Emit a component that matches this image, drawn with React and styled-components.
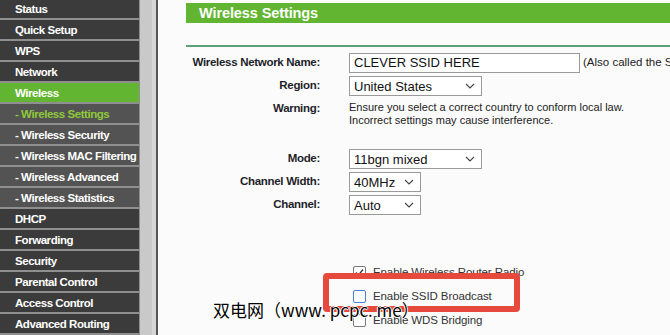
import React from "react";
import styled, { createGlobalStyle } from "styled-components";

const GlobalStyle = createGlobalStyle`
  html, body {
    margin: 0;
    padding: 0;
    overflow: hidden;
    background: #fbfbfb;
  }
  body {
    font-family: "Liberation Sans", Arial, sans-serif;
  }
`;

const menu = [
  { label: "Status" },
  { label: "Quick Setup" },
  { label: "WPS" },
  { label: "Network" },
  { label: "Wireless", active: true },
  { label: "- Wireless Settings", sub: true, current: true },
  { label: "- Wireless Security", sub: true },
  { label: "- Wireless MAC Filtering", sub: true },
  { label: "- Wireless Advanced", sub: true },
  { label: "- Wireless Statistics", sub: true },
  { label: "DHCP" },
  { label: "Forwarding" },
  { label: "Security" },
  { label: "Parental Control" },
  { label: "Access Control" },
  { label: "Advanced Routing" },
];

const Page = styled.div`
  position: relative;
  display: flex;
  width: 670px;
  height: 335px;
  overflow: hidden;
  background: #fbfbfb;
`;

const Sidebar = styled.nav`
  width: 140px;
  flex-shrink: 0;
  display: flex;
  flex-direction: column;
  margin-top: -1px;
  background: #8f8f8f;
`;

const MenuItem = styled.div`
  height: 19px;
  margin-bottom: 2px;
  margin-right: 1px;
  display: flex;
  align-items: center;
  padding-left: 15px;
  font-size: 11.5px;
  letter-spacing: -0.45px;
  font-weight: bold;
  white-space: nowrap;
  color: ${({ $current }) => ($current ? "#8fc93a" : "#ffffff")};
  background: ${({ $active, $sub }) =>
    $active ? "#62b531" : $sub ? "#535353" : "#3b3b3b"};
`;

const Gutter = styled.div`
  width: 18px;
  flex-shrink: 0;
  display: flex;
  background: #c9c9c9;
`;

const GutterEdge = styled.div`
  margin-left: auto;
  width: 4px;
  background: #d6d6d6;
  border-right: 2px solid #555;
`;

const Main = styled.main`
  flex: 1;
  padding: 3px 0 0 28px;
  display: flex;
  flex-direction: column;
`;

const HeaderBar = styled.div`
  height: 20px;
  background: #62b531;
  color: #fff;
  font-weight: bold;
  font-size: 14.5px;
  letter-spacing: -0.1px;
  display: flex;
  align-items: center;
  padding-left: 13px;
`;

const Rule = styled.div`
  height: 2px;
  margin-top: 22px;
  background: #5f9f7a;
`;

const Form = styled.div`
  display: grid;
  grid-template-columns: 134px 1fr;
  column-gap: 29px;
  margin-top: 6px;
`;

const Label = styled.div`
  grid-column: 1;
  text-align: right;
  font-size: 11.5px;
  letter-spacing: -0.3px;
  font-weight: bold;
  color: #1f1f2a;
  height: ${({ $h }) => $h || 23}px;
  line-height: 19px;
  white-space: nowrap;
`;

const Field = styled.div`
  grid-column: 2;
  display: flex;
  align-items: flex-start;
  gap: 3px;
  height: ${({ $h }) => $h || 23}px;
  white-space: nowrap;
`;

const TextBox = styled.div`
  width: 225px;
  height: 18px;
  border: 1px solid #9a9a9a;
  background: #fff;
  font-size: 13px;
  line-height: 18px;
  padding-left: 4px;
  color: #111;
`;

const Hint = styled.span`
  font-size: 11.5px;
  line-height: 19px;
  color: #222;
`;

const Select = styled.div`
  width: ${({ $w }) => $w}px;
  height: 18px;
  border: 1px solid #9a9a9a;
  background: #fff;
  display: flex;
  align-items: center;
  justify-content: space-between;
  padding: 0 6px 0 4px;
  box-sizing: content-box;
  font-size: 13px;
  color: #111;
`;

const Note = styled.div`
  font-size: 11px;
  line-height: 13px;
  color: #222;
  padding-top: 2px;
`;

const Checks = styled.div`
  display: flex;
  flex-direction: column;
  margin: 48px 0 0 167px;
  gap: 12px;
`;

const CheckRow = styled.div`
  display: flex;
  align-items: center;
  gap: 7px;
  height: 12px;
  font-size: 11.5px;
  letter-spacing: -0.1px;
  color: #333;
`;

const Box = styled.span`
  width: 11px;
  height: 11px;
  border: 1px solid ${({ $blue }) => ($blue ? "#4a7fd6" : "#777")};
  border-radius: 2px;
  background: #fff;
  display: flex;
  align-items: center;
  justify-content: center;
`;

const Highlight = styled.div`
  position: absolute;
  left: 323px;
  top: 273px;
  width: 185px;
  height: 27px;
  border: 6px solid #e64a3c;
  border-radius: 4px;
`;

const Watermark = styled.div`
  position: absolute;
  left: 213px;
  top: 300px;
  font-family: "Noto Sans CJK SC", "Liberation Sans", sans-serif;
  font-size: 17px;
  line-height: 20px;
  color: #000;
  white-space: nowrap;
  text-shadow: 1px 0 0 #fff, -1px 0 0 #fff, 0 1px 0 #fff, 0 -1px 0 #fff;
`;

const Chevron = () => (
  <svg width="10" height="6" viewBox="0 0 10 6">
    <path d="M1 1l4 4 4-4" fill="none" stroke="#444" strokeWidth="1.1" />
  </svg>
);

const Tick = () => (
  <svg width="9" height="9" viewBox="0 0 9 9">
    <path d="M1 4.5l2.5 2.5L8 1.5" fill="none" stroke="#333" strokeWidth="1.3" />
  </svg>
);

export default function App() {
  return (
    <>
      <GlobalStyle />
      <Page>
        <Sidebar>
          {menu.map((m) => (
            <MenuItem key={m.label} $active={m.active} $sub={m.sub} $current={m.current}>
              {m.label}
            </MenuItem>
          ))}
        </Sidebar>
        <Gutter>
          <GutterEdge />
        </Gutter>
        <Main>
          <HeaderBar>Wireless Settings</HeaderBar>
          <Rule />
          <Form>
            <Label>Wireless Network Name:</Label>
            <Field>
              <TextBox>CLEVER SSID HERE</TextBox>
              <Hint>(Also called the SSID)</Hint>
            </Field>
            <Label>Region:</Label>
            <Field>
              <Select $w={121}>
                United States
                <Chevron />
              </Select>
            </Field>
            <Label $h={50}>Warning:</Label>
            <Field $h={50}>
              <Note>
                Ensure you select a correct country to conform local law.
                <br />
                Incorrect settings may cause interference.
              </Note>
            </Field>
            <Label>Mode:</Label>
            <Field>
              <Select $w={121}>
                11bgn mixed
                <Chevron />
              </Select>
            </Field>
            <Label>Channel Width:</Label>
            <Field>
              <Select $w={60}>
                40MHz
                <Chevron />
              </Select>
            </Field>
            <Label>Channel:</Label>
            <Field>
              <Select $w={60}>
                Auto
                <Chevron />
              </Select>
            </Field>
          </Form>
          <Checks>
            <CheckRow>
              <Box>
                <Tick />
              </Box>
              Enable Wireless Router Radio
            </CheckRow>
            <CheckRow>
              <Box $blue />
              Enable SSID Broadcast
            </CheckRow>
            <CheckRow>
              <Box />
              Enable WDS Bridging
            </CheckRow>
          </Checks>
        </Main>
        <Highlight />
        <Watermark>双电网（www. pcpc. me）</Watermark>
      </Page>
    </>
  );
}
